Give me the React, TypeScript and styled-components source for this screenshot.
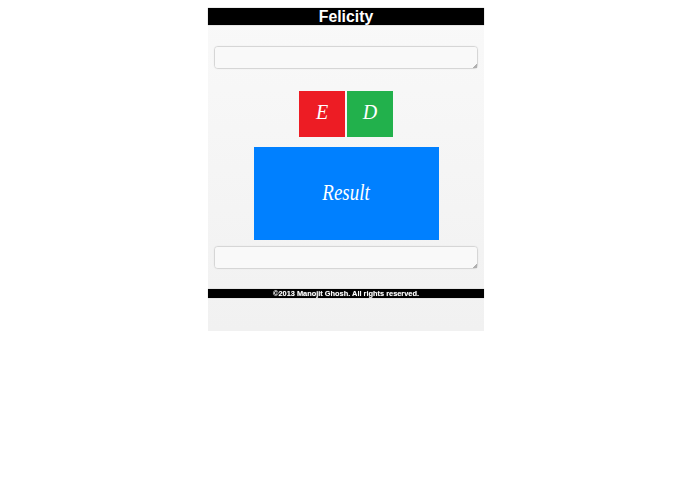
import React from "react";
import styled, { createGlobalStyle } from "styled-components";

const Global = createGlobalStyle`
  html, body { margin: 0; padding: 0; background: #fff; }
  body { padding-top: 8px; font-family: "Liberation Sans", Arial, sans-serif; }
`;

const Page = styled.div`
  width: 276px;
  height: 323px;
  margin: 0 auto 0 208px;
  background: linear-gradient(#f9f9f9, #f1f1f1);
  display: flex;
  flex-direction: column;
  align-items: center;
`;

const Header = styled.h1`
  align-self: stretch;
  margin: 0;
  height: 17px;
  background: #000;
  color: #fff;
  font-size: 15.8px;
  font-weight: 700;
  line-height: 17px;
  text-align: center;
  box-shadow: 0 0 1px rgba(0, 0, 0, 0.45);
`;

const Field = styled.textarea<{ $top: number }>`
  display: block;
  box-sizing: border-box;
  width: 264px;
  height: 23px;
  margin-top: ${(p) => p.$top}px;
  padding: 4px;
  background: #f9f9f9;
  border: 1px solid #d6d6d6;
  border-radius: 4px;
  box-shadow: 0 0 1px rgba(0, 0, 0, 0.12);
  outline: none;
  resize: both;

  &::-webkit-resizer {
    background: linear-gradient(135deg, transparent 84%, #b0b0b0 84%);
  }
`;

const Buttons = styled.div`
  display: flex;
  gap: 2px;
  margin-top: 22px;
`;

const Cipher = styled.button<{ $bg: string }>`
  width: 46px;
  height: 46px;
  padding: 0 0 4px;
  border: 0;
  background: ${(p) => p.$bg};
  color: #fff;
  font-family: "Liberation Serif", serif;
  font-style: italic;
  font-size: 20px;
`;

const Result = styled.div`
  width: 185px;
  height: 93px;
  margin-top: 10px;
  background: #0080ff;
  color: #fff;
  font-family: "Liberation Serif", serif;
  font-style: italic;
  font-size: 24px;
  display: flex;
  align-items: center;
  justify-content: center;
`;

const ResultLabel = styled.span`
  display: block;
  margin-top: -2px;
  transform: scaleX(0.79);
`;

const Footer = styled.footer`
  align-self: stretch;
  margin-top: 20px;
  height: 9px;
  background: #000;
  color: #fff;
  font-size: 7.4px;
  font-weight: 700;
  line-height: 9px;
  text-align: center;
  white-space: nowrap;
  text-shadow: 0 0 1px rgba(255, 255, 255, 0.5);
  box-shadow: 0 0 1px rgba(0, 0, 0, 0.3);
`;

export default function App() {
  return (
    <>
      <Global />
      <Page>
        <Header>Felicity</Header>
        <Field $top={21} />
        <Buttons>
          <Cipher $bg="#ed1c24">E</Cipher>
          <Cipher $bg="#22b14c">D</Cipher>
        </Buttons>
        <Result>
          <ResultLabel>Result</ResultLabel>
        </Result>
        <Field $top={6} />
        <Footer>©2013 Manojit Ghosh. All rights reserved.</Footer>
      </Page>
    </>
  );
}
